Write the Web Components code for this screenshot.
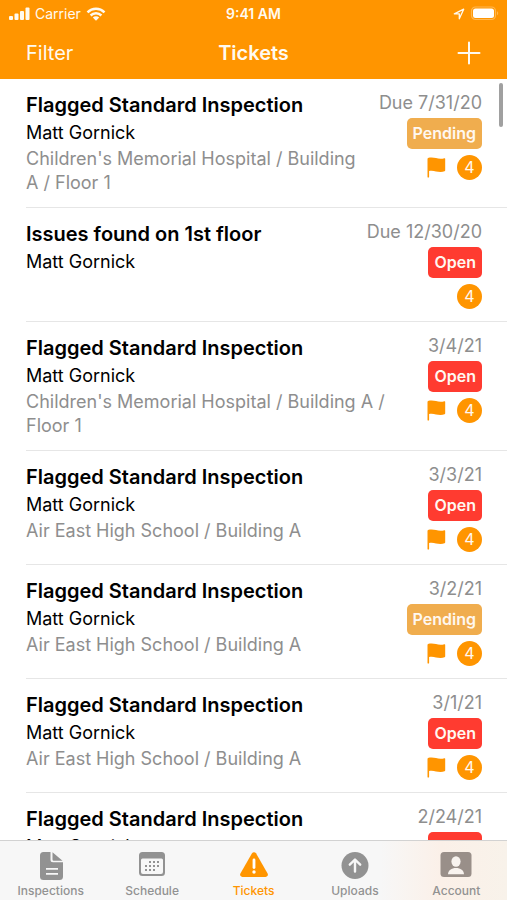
<!DOCTYPE html>
<html lang="en">
<head>
<meta charset="utf-8">
<meta name="viewport" content="width=device-width, initial-scale=1">
<title>Tickets</title>
<style>
  body {
    margin: 0;
    background: #fff;
    color: #000;
    font-family: Inter, "Liberation Sans", sans-serif;
  }
</style>
</head>
<body>
<ticket-app>
  <status-bar slot="top" carrier="Carrier" time="9:41 AM"></status-bar>
  <nav-bar slot="top" action="Filter">Tickets</nav-bar>

  <ticket-row due="Due 7/31/20" status="Pending" priority="4" flagged>
    Flagged Standard Inspection
    <span slot="person">Matt Gornick</span>
    <span slot="place">Children's Memorial Hospital / Building A / Floor 1</span>
  </ticket-row>
  <ticket-row due="Due 12/30/20" status="Open" priority="4">
    Issues found on 1st floor
    <span slot="person">Matt Gornick</span>
  </ticket-row>
  <ticket-row due="3/4/21" status="Open" priority="4" flagged>
    Flagged Standard Inspection
    <span slot="person">Matt Gornick</span>
    <span slot="place">Children's Memorial Hospital / Building A / Floor 1</span>
  </ticket-row>
  <ticket-row due="3/3/21" status="Open" priority="4" flagged>
    Flagged Standard Inspection
    <span slot="person">Matt Gornick</span>
    <span slot="place">Air East High School / Building A</span>
  </ticket-row>
  <ticket-row due="3/2/21" status="Pending" priority="4" flagged>
    Flagged Standard Inspection
    <span slot="person">Matt Gornick</span>
    <span slot="place">Air East High School / Building A</span>
  </ticket-row>
  <ticket-row due="3/1/21" status="Open" priority="4" flagged>
    Flagged Standard Inspection
    <span slot="person">Matt Gornick</span>
    <span slot="place">Air East High School / Building A</span>
  </ticket-row>
  <ticket-row due="2/24/21" status="Open">
    Flagged Standard Inspection
    <span slot="person">Matt Gornick</span>
  </ticket-row>

  <tab-bar slot="bottom">
    <tab-item icon="document">Inspections</tab-item>
    <tab-item icon="calendar">Schedule</tab-item>
    <tab-item icon="alert" active>Tickets</tab-item>
    <tab-item icon="upload">Uploads</tab-item>
    <tab-item icon="person">Account</tab-item>
  </tab-bar>
</ticket-app>

<script>
function component(name, css, html, setup) {
  const template = document.createElement("template");
  template.innerHTML = `<style>${css}</style>${html}`;

  customElements.define(name, class extends HTMLElement {
    constructor() {
      super();
      this.attachShadow({ mode: "open" }).appendChild(template.content.cloneNode(true));
    }
    connectedCallback() {
      if (setup) setup(this, this.shadowRoot);
    }
  });
}

const icons = {
  document: `<path fill-rule="evenodd" d="M6.500 1H13.500v7.800a2.500 2.500 0 0 0 2.500 2.500H26v14.200a3.500 3.500 0 0 1-3.500 3.500h-16A3.500 3.500 0 0 1 3 25.500v-21A3.500 3.500 0 0 1 6.500 1zM9 17v1.800h12v-1.800zM9 22v1.800h12v-1.800z"/><path d="M15.500 1.300L25.500 9.800H16.700a1.200 1.200 0 0 1-1.200-1.200z"/>`,
  calendar: `<path fill-rule="evenodd" d="M4.500 1h19A3.500 3.500 0 0 1 27 4.500v17a3.500 3.500 0 0 1-3.500 3.500h-19A3.500 3.500 0 0 1 1 21.500v-17A3.500 3.500 0 0 1 4.500 1zM4.500 7.500A1.500 1.500 0 0 0 3 9v12a2 2 0 0 0 2 2h18a2 2 0 0 0 2-2V9a1.500 1.500 0 0 0-1.500-1.500z"/><path d="M11 10h2v2h-2zm4 0h2v2h-2zm4 0h2v2h-2zM7 14h2v2H7zm4 0h2v2h-2zm4 0h2v2h-2zm4 0h2v2h-2zM7 18h2v2H7zm4 0h2v2h-2zm4 0h2v2h-2z"/>`,
  alert: `<path d="M12 2.200a2.400 2.400 0 0 1 4 0l11.600 20.400a2.300 2.300 0 0 1-2 3.400H2.400a2.300 2.300 0 0 1-2-3.400z"/><path d="M14 9v7.500" stroke="#fff" stroke-width="2.800" stroke-linecap="round"/><circle cx="14" cy="21" r="1.700" fill="#fff"/>`,
  upload: `<circle cx="14" cy="14.500" r="13.500"/><path d="M14 20.500V9M8.800 13.700L14 8.500l5.200 5.200" fill="none" stroke="#f7f7f7" stroke-width="2.400" stroke-linecap="round" stroke-linejoin="round"/>`,
  person: `<rect x="-1.500" y="1" width="31" height="25" rx="3.500" fill="#998f89"/><ellipse cx="14" cy="10.500" rx="4.600" ry="5.200" fill="#f8f3ef"/><path d="M6 23.300c0-4 3.500-6.300 8-6.300s8 2.300 8 6.300z" fill="#f8f3ef"/>`
};

component("ticket-app", `
  :host {
    display: flex;
    flex-direction: column;
    height: 100vh;
  }
  header {
    background: #ff9500;
    color: #fffaf0;
  }
  main {
    position: relative;
    flex: 1;
    min-height: 0;
    overflow: hidden;
  }
  .thumb {
    position: absolute;
    top: 4px;
    right: 4px;
    width: 4px;
    height: 44px;
    border-radius: 2px;
    background: #a0a0a0;
  }
`, `
  <header><slot name="top"></slot></header>
  <main>
    <div role="list"><slot></slot></div>
    <div class="thumb"></div>
  </main>
  <slot name="bottom"></slot>
`);

component("status-bar", `
  :host {
    display: grid;
    grid-template-columns: 1fr auto 1fr;
    align-items: center;
    height: 27px;
    padding: 0 8px;
    font-size: 14px;
    line-height: 27px;
  }
  div {
    display: flex;
    align-items: center;
    gap: 5px;
  }
  .end { justify-content: flex-end; }
  .time { font-weight: 600; }
  svg { display: block; fill: currentColor; }
`, `
  <div>
    <svg width="22" height="14" viewBox="0 0 22 14" aria-hidden="true">
      <rect x="1" y="9" width="4" height="4" rx="1"/>
      <rect x="6.500" y="6.500" width="4" height="6.500" rx="1"/>
      <rect x="12" y="4" width="4" height="9" rx="1"/>
      <rect x="17.500" y="0.500" width="4" height="12.500" rx="1"/>
    </svg>
    <span class="carrier"></span>
    <svg width="20" height="14" viewBox="0 0 20 14" aria-hidden="true">
      <path d="M1.500 5.300a12.200 12.200 0 0 1 17 0M4.600 8.500a7.800 7.800 0 0 1 10.800 0" fill="none" stroke="currentColor" stroke-width="2.500"/>
      <path d="M10 13.800L6.800 10.600a4.600 4.600 0 0 1 6.400 0z"/>
    </svg>
  </div>
  <span class="time"></span>
  <div class="end">
    <svg width="12" height="12" viewBox="0 0 12 12" aria-hidden="true">
      <path d="M1.300 5.800L10.700 1.200 6.300 10.800V5.800z" fill="none" stroke="currentColor" stroke-width="1.300" stroke-linejoin="round"/>
    </svg>
    <svg width="29" height="15" viewBox="0 0 29 15" aria-hidden="true">
      <rect x="1.500" y="1" width="24" height="12.500" rx="4" fill="none" stroke="#ffb850" stroke-width="1.200"/>
      <rect x="3" y="2.500" width="21" height="9.500" rx="2.500" fill="#fff"/>
      <path d="M27 5.200c1.600.6 1.600 3.500 0 4.100z" fill="#ffb850"/>
    </svg>
  </div>
`, (host, root) => {
  root.querySelector(".carrier").textContent = host.getAttribute("carrier");
  root.querySelector(".time").textContent = host.getAttribute("time");
});

component("nav-bar", `
  :host {
    display: grid;
    grid-template-columns: 1fr auto 1fr;
    align-items: center;
    height: 52px;
    padding: 0 26px;
  }
  button {
    border: 0;
    padding: 0;
    background: none;
    color: inherit;
    font: inherit;
    font-size: 20px;
    cursor: pointer;
  }
  .action { justify-self: start; }
  .add { justify-self: end; }
  h1 {
    margin: 0;
    font-size: 20px;
    font-weight: 600;
  }
  svg { display: block; }
`, `
  <button type="button" class="action"></button>
  <h1><slot></slot></h1>
  <button type="button" class="add" aria-label="Add ticket">
    <svg width="24" height="24" viewBox="0 0 24 24">
      <path d="M12 1.500v21M1.500 12h21" stroke="currentColor" stroke-width="2" stroke-linecap="round"/>
    </svg>
  </button>
`, (host, root) => {
  root.querySelector(".action").textContent = host.getAttribute("action");
});

component("status-badge", `
  :host {
    display: block;
    padding: 0 6px;
    border-radius: 5px;
    background: #ff3b30;
    color: #fff8f0;
    font-size: 16px;
    font-weight: 600;
    line-height: 31px;
  }
  :host([kind="Pending"]) { background: #f0ad4e; }
`, `<slot></slot>`);

component("ticket-row", `
  :host {
    display: flex;
    gap: 18px;
    margin-left: 26px;
    padding: 12px 25px 12px 0;
    border-bottom: 1px solid #e6e6e6;
  }
  .text {
    flex: 1;
    min-width: 0;
  }
  h2 {
    margin: 0;
    font-size: 20px;
    font-weight: 600;
    line-height: 28px;
  }
  .person {
    font-size: 18px;
    line-height: 28px;
  }
  .place {
    color: #8e8e8e;
    font-size: 18px;
    line-height: 24px;
  }
  .side {
    display: flex;
    flex-direction: column;
    align-items: flex-end;
  }
  .due {
    color: #8e8e8e;
    font-size: 18px;
    line-height: 24px;
  }
  status-badge { margin: 3px 0 6px; }
  .marks {
    display: flex;
    align-items: center;
    gap: 11px;
  }
  svg { display: none; fill: #ff9500; }
  :host([flagged]) svg { display: block; }
  .priority {
    width: 25px;
    border-radius: 50%;
    background: #ff9500;
    color: #fff8f0;
    font-size: 16px;
    line-height: 25px;
    text-align: center;
  }
`, `
  <div class="text">
    <h2><slot></slot></h2>
    <div class="person"><slot name="person"></slot></div>
    <div class="place"><slot name="place"></slot></div>
  </div>
  <div class="side">
    <div class="due"></div>
    <status-badge></status-badge>
    <div class="marks">
      <svg width="20" height="21" viewBox="0 0 20 21" role="img" aria-label="Flagged">
        <path d="M1.500 1.800C1.500.9 3.200.6 5.500.6c3.500 0 5.500 1.200 9 1.200 1.600 0 2.900-.3 3.700-.6.600-.2 1 0 1 .6v11.400c0 .6-.2.900-.8 1.100-.9.400-2.200.7-3.900.7-3.500 0-5.500-1.300-9-1.300-1.100 0-1.800.1-2.400.3v6c0 .8-1.600.8-1.600 0z"/>
      </svg>
      <span class="priority"></span>
    </div>
  </div>
`, (host, root) => {
  const badge = root.querySelector("status-badge");
  host.setAttribute("role", "listitem");
  root.querySelector(".due").textContent = host.getAttribute("due");
  root.querySelector(".priority").textContent = host.getAttribute("priority");
  badge.textContent = host.getAttribute("status");
  badge.setAttribute("kind", host.getAttribute("status"));
});

component("tab-bar", `
  :host { display: block; }
  nav {
    display: flex;
    height: 59px;
    border-top: 1px solid #d2d2d2;
    background: linear-gradient(90deg, #f7f7f7 75%, #fbf0e8 87%, #f8f2ea);
  }
`, `<nav><slot></slot></nav>`);

component("tab-item", `
  :host {
    display: block;
    flex: 1;
    color: #929292;
  }
  :host([active]) { color: #ff9500; }
  a {
    display: flex;
    flex-direction: column;
    align-items: center;
    gap: 2px;
    padding-top: 10px;
    color: inherit;
    font-size: 12px;
    font-weight: 500;
    line-height: 18px;
    text-decoration: none;
  }
  svg {
    display: block;
    overflow: visible;
    fill: currentColor;
  }
`, `
  <a href="#">
    <svg width="28" height="29" viewBox="0 0 28 29" aria-hidden="true"></svg>
    <span><slot></slot></span>
  </a>
`, (host, root) => {
  root.querySelector("svg").innerHTML = icons[host.getAttribute("icon")];
  if (host.hasAttribute("active")) root.querySelector("a").setAttribute("aria-current", "page");
});
</script>
</body>
</html>
